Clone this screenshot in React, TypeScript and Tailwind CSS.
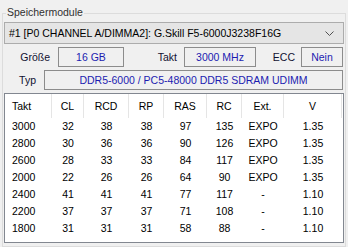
import React from 'react';

const TIMINGS = [
  { takt: '3000', cl: '32', rcd: '38', rp: '38', ras: '97', rc: '135', ext: 'EXPO', v: '1.35' },
  { takt: '2800', cl: '30', rcd: '36', rp: '36', ras: '90', rc: '126', ext: 'EXPO', v: '1.35' },
  { takt: '2600', cl: '28', rcd: '33', rp: '33', ras: '84', rc: '117', ext: 'EXPO', v: '1.35' },
  { takt: '2000', cl: '22', rcd: '26', rp: '26', ras: '64', rc: '90', ext: 'EXPO', v: '1.35' },
  { takt: '2400', cl: '41', rcd: '41', rp: '41', ras: '77', rc: '117', ext: '-', v: '1.10' },
  { takt: '2200', cl: '37', rcd: '37', rp: '37', ras: '71', rc: '108', ext: '-', v: '1.10' },
  { takt: '1800', cl: '31', rcd: '31', rp: '31', ras: '58', rc: '88', ext: '-', v: '1.10' },
];

// column widths, left to right
const COLS = [
  { key: 'takt', label: 'Takt', w: 'w-[47px]', align: 'justify-start pl-[7px]' },
  { key: 'cl', label: 'CL', w: 'w-[32px]', align: 'justify-center' },
  { key: 'rcd', label: 'RCD', w: 'w-[45px]', align: 'justify-center' },
  { key: 'rp', label: 'RP', w: 'w-[35px]', align: 'justify-center' },
  { key: 'ras', label: 'RAS', w: 'w-[43px]', align: 'justify-center' },
  { key: 'rc', label: 'RC', w: 'w-[35px]', align: 'justify-center' },
  { key: 'ext', label: 'Ext.', w: 'w-[42px]', align: 'justify-center' },
  { key: 'v', label: 'V', w: 'w-[58px]', align: 'justify-center' },
] as const;

function ValueBox({ value, className }: { value: string; className: string }) {
  return (
    <div className={`h-[20px] border border-[#8c8c8c] flex items-center justify-center text-[#1c1cb0] ${className}`}>
      {value}
    </div>
  );
}

function Label({ text, className }: { text: string; className: string }) {
  return <div className={`h-[20px] flex items-center justify-end text-[#101030] ${className}`}>{text}</div>;
}

export default function App() {
  return (
    <div
      className="w-[348px] h-[247px] bg-[#f0f0f0] pt-[13px] pl-[2px] overflow-hidden text-[10.5px] leading-none text-black"
      style={{ fontFamily: '"Liberation Sans", Arial, sans-serif' }}
    >
      <div className="relative w-[344px] h-[234px] border border-[#dcdcdc] pl-[1px]">
        <span className="absolute left-[3px] top-[-7px] bg-[#f0f0f0] px-[1px] text-[#303030]">Speichermodule</span>

        {/* module selector */}
        <div className="mt-[8px] w-[340px] h-[22px] border border-[#acacac] bg-[#e5e5e5] flex items-center justify-between pl-[4px] pr-[9px]">
          <span>#1 [P0 CHANNEL A/DIMMA2]: G.Skill F5-6000J3238F16G</span>
          <svg width="9" height="5" viewBox="0 0 9 5" fill="none">
            <polyline points="0.5,0.5 4.5,4.5 8.5,0.5" stroke="#505050" strokeWidth="1" />
          </svg>
        </div>

        <div className="mt-[3px] flex">
          <Label text="Größe" className="w-[54px] pr-[8px]" />
          <ValueBox value="16 GB" className="w-[66px]" />
          <Label text="Takt" className="w-[60px] pr-[7px]" />
          <ValueBox value="3000 MHz" className="w-[72px]" />
          <Label text="ECC" className="w-[45px] pr-[6px]" />
          <ValueBox value="Nein" className="w-[42px]" />
        </div>

        <div className="mt-[3px] flex">
          <Label text="Typ" className="w-[40px] pr-[8px]" />
          <ValueBox value="DDR5-6000 / PC5-48000 DDR5 SDRAM UDIMM" className="w-[299px]" />
        </div>

        {/* timings list */}
        <div className="mt-[3px] w-[340px] h-[150px] border border-[#828790] bg-white">
          <div className="flex h-[24px]">
            {COLS.map(c => (
              <div key={c.key} className={`${c.w} h-full flex items-center border-r border-[#e5e5e5] ${c.align}`}>
                {c.label}
              </div>
            ))}
          </div>
          {TIMINGS.map(row => (
            <div key={row.takt} className="flex h-[17px]">
              {COLS.map(c => (
                <div key={c.key} className={`${c.w} h-full flex items-center ${c.align}`}>
                  {row[c.key]}
                </div>
              ))}
            </div>
          ))}
        </div>
      </div>
    </div>
  );
}
